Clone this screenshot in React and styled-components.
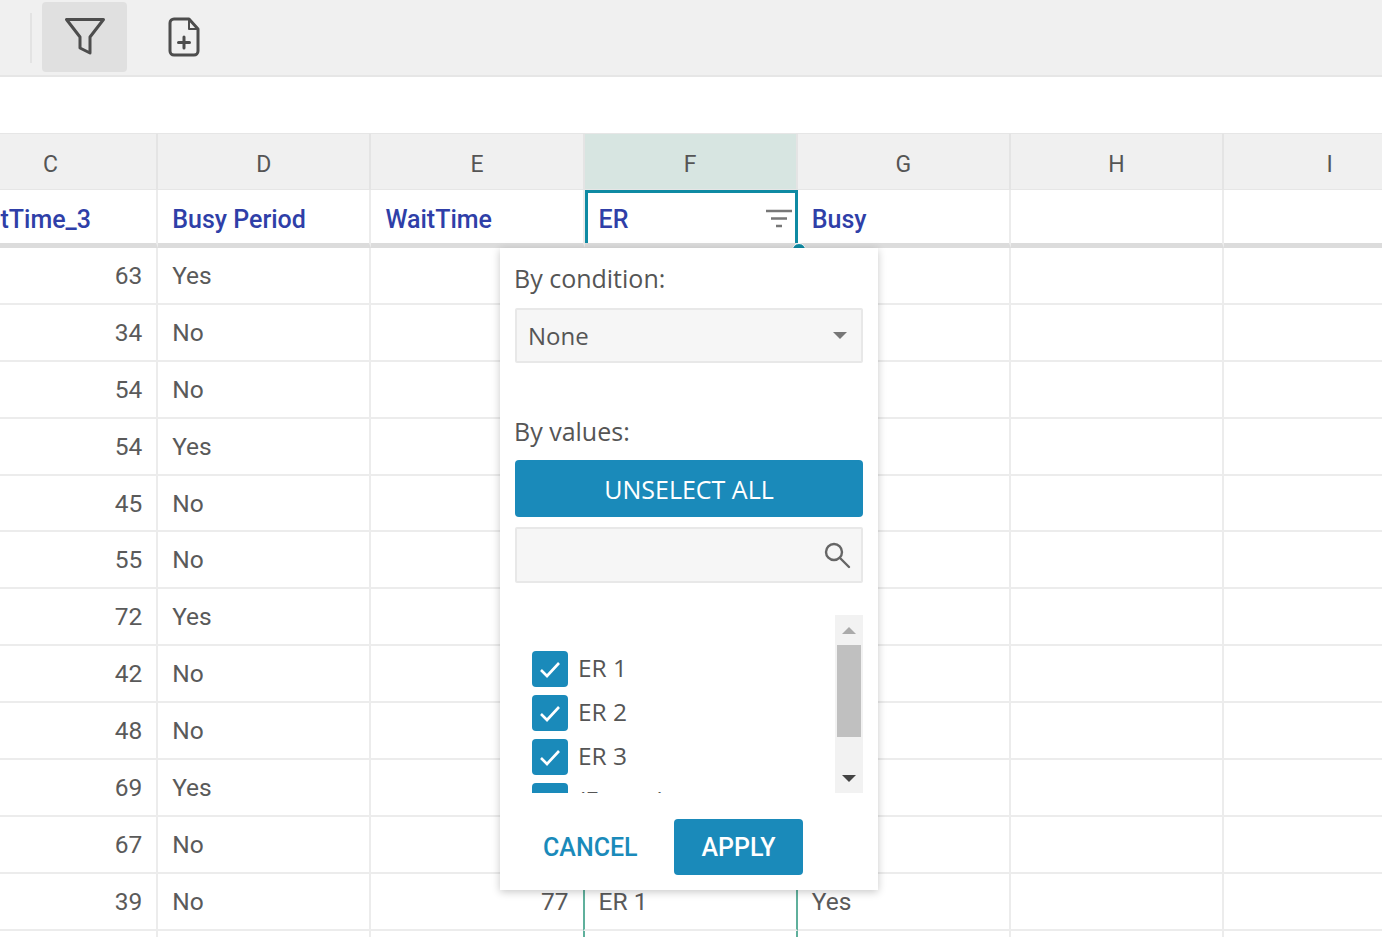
import React from 'react';
import styled, { createGlobalStyle } from 'styled-components';

const Global = createGlobalStyle`
  html, body { margin: 0; padding: 0; background: #fff; }
  body { font-family: Roboto, "Liberation Sans", sans-serif; color: #4a4a4a; }
`;

const Page = styled.div`
  position: relative;
  width: 1382px;
  height: 937px;
  overflow: hidden;
  background: #fff;
`;

const Toolbar = styled.div`
  height: 75px;
  display: flex;
  align-items: center;
  background: #f0f0f0;
  border-bottom: 2px solid #e6e6e6;
  padding-left: 30px;
`;

const Divider = styled.div`
  width: 2px;
  height: 50px;
  background: #e3e3e3;
  margin-right: 10px;
`;

const ToolButton = styled.div`
  width: 85px;
  height: 70px;
  margin-top: -1px;
  margin-right: 14px;
  display: flex;
  align-items: center;
  justify-content: center;
  border-radius: 4px;
  background: ${p => (p.$active ? '#e0e0e0' : 'transparent')};
`;

const Spacer = styled.div`
  height: 56px;
`;

const Grid = styled.div`
  display: grid;
  grid-template-columns: repeat(7, 213.2px);
  margin-left: -55px;
  width: 1500px;
`;

const ColHead = styled.div`
  height: 57px;
  display: flex;
  align-items: center;
  justify-content: center;
  box-sizing: border-box;
  padding-top: 5px;
  font-size: 23px;
  color: #555;
  background: ${p => (p.$selected ? '#d7e5e1' : '#f0f0f0')};
  border-top: 1px solid #e6e6e6;
  border-right: 2px solid #e4e4e4;
  border-bottom: 1px solid #e6e6e6;
`;

const TitleCell = styled.div`
  position: relative;
  height: 58px;
  box-sizing: border-box;
  display: flex;
  align-items: center;
  padding: 5px 3px 0 14px;
  font-size: 25px;
  font-weight: 500;
  color: #2f3fa8;
  border-right: 2px solid #ececec;
  border-bottom: 5px solid #dcdcdc;
`;

const ActiveFrame = styled.div`
  position: absolute;
  left: 0;
  right: -2px;
  top: 0;
  bottom: 0;
  border: 3px solid #0f8aa3;
  border-bottom: none;
  pointer-events: none;
`;

const Cell = styled.div`
  height: 56.9px;
  box-sizing: border-box;
  display: flex;
  align-items: center;
  justify-content: ${p => (p.$num ? 'flex-end' : 'flex-start')};
  padding: 0 14px;
  font-size: 24.5px;
  color: #5a5a5a;
  border-bottom: 2px solid #ececec;
  border-right: ${p => (p.$tealRight ? '2px solid #5fb09c' : '2px solid #ececec')};
  margin-left: ${p => (p.$tealLeft ? '-2px' : '0')};
  border-left: ${p => (p.$tealLeft ? '2px solid #5fb09c' : 'none')};
`;

const FilterIcon = styled.svg`
  margin-left: auto;
`;

const Popup = styled.div`
  position: absolute;
  left: 500px;
  top: 248px;
  width: 378px;
  height: 642px;
  box-sizing: border-box;
  padding: 14px 15px 0;
  background: #fff;
  box-shadow: 0 2px 8px rgba(0, 0, 0, 0.22);
  font-family: "Open Sans", sans-serif;
  display: flex;
  flex-direction: column;
`;

const Label = styled.div`
  font-size: 25px;
  line-height: 32px;
  color: #555;
  margin-top: ${p => p.$top || 0}px;
  margin-left: -1px;
`;

const Field = styled.div`
  height: ${p => p.$height || 56}px;
  margin-top: ${p => p.$top || 0}px;
  box-sizing: border-box;
  display: flex;
  align-items: center;
  justify-content: space-between;
  padding: 0 ${p => p.$right || 14}px 0 11px;
  background: #f6f6f6;
  border: 2px solid #e8e8e8;
  border-radius: 2px;
  font-size: 24px;
  color: #555;
`;

const Caret = styled.span`
  width: 0;
  height: 0;
  border-left: 7px solid transparent;
  border-right: 7px solid transparent;
  border-top: 7px solid ${p => p.$color || '#777'};
  ${p => p.$up && `border-top: none; border-bottom: 7px solid ${p.$color || '#aaa'};`}
`;

const UnselectButton = styled.div`
  height: 57px;
  margin: 13px 0 10px;
  box-sizing: border-box;
  display: flex;
  align-items: center;
  justify-content: center;
  background: #1a8aba;
  border-radius: 4px;
  color: #fff;
  font-size: 25px;
  font-weight: 500;
`;

const ListArea = styled.div`
  height: 178px;
  margin-top: 32px;
  display: flex;
  justify-content: space-between;
  overflow: hidden;
`;

const List = styled.div`
  padding: 36px 0 0 17px;
  display: flex;
  flex-direction: column;
  gap: 8px;
`;

const Row = styled.div`
  display: flex;
  align-items: center;
  gap: 10px;
  height: 36px;
  flex: none;
  font-size: 24.5px;
  color: #555;
`;

const ItemText = styled.span`
  margin-top: -3px;
`;

const Check = styled.span`
  width: 36px;
  height: 36px;
  display: flex;
  align-items: center;
  justify-content: center;
  background: #1a8aba;
  border-radius: 4px;
`;

const Scrollbar = styled.div`
  width: 28px;
  display: flex;
  flex-direction: column;
  align-items: center;
  background: #f2f2f2;
`;

const ScrollEnd = styled.div`
  height: 30px;
  display: flex;
  align-items: center;
  justify-content: center;
`;

const Thumb = styled.div`
  width: 24px;
  height: 92px;
  background: #c0c0c0;
`;

const ScrollGap = styled.div`
  flex: 1;
`;

const Footer = styled.div`
  display: flex;
  align-items: center;
  margin-top: 26px;
  padding-left: 28px;
  font-family: Roboto, sans-serif;
  font-size: 25px;
  font-weight: 500;
`;

const CancelLink = styled.span`
  color: #1a8aba;
  width: 131px;
`;

const ApplyButton = styled.div`
  width: 129px;
  height: 56px;
  display: flex;
  align-items: center;
  justify-content: center;
  background: #1a8aba;
  border-radius: 4px;
  color: #fff;
`;

const Handle = styled.div`
  position: absolute;
  left: 792px;
  top: 243px;
  width: 12px;
  height: 12px;
  border-radius: 50%;
  background: #0f8aa3;
  border: 1px solid #fff;
`;

const columns = ['C', 'D', 'E', 'F', 'G', 'H', 'I'];
// only the columns the filter popup leaves visible hold values
const rows = [
  [63, 'Yes'], [34, 'No'], [54, 'No'], [54, 'Yes'], [45, 'No'], [55, 'No'],
  [72, 'Yes'], [42, 'No'], [48, 'No'], [69, 'Yes'], [67, 'No'],
  [39, 'No', 77, 'ER 1', 'Yes'],
  [],
];

function CheckItem({ label }) {
  return (
    <Row>
      <Check>
        <svg width="24" height="24" viewBox="0 0 24 24" fill="none" stroke="#fff" strokeWidth="2.6">
          <path d="M3 13l6 6L21 6" />
        </svg>
      </Check>
      <ItemText>{label}</ItemText>
    </Row>
  );
}

export default function App() {
  return (
    <Page>
      <Global />
      <Toolbar>
        <Divider />
        <ToolButton $active>
          <svg width="42" height="40" viewBox="0 0 42 40" fill="none" stroke="#4d4d4d" strokeWidth="3" strokeLinejoin="round">
            <path d="M2.5 2.5h37L26 20v16l-10-5V20z" />
          </svg>
        </ToolButton>
        <ToolButton>
          <svg width="32" height="40" viewBox="0 0 32 40" fill="none" stroke="#4d4d4d" strokeWidth="3" strokeLinejoin="round" strokeLinecap="round">
            <path d="M6 2h15l9 10v22a4 4 0 0 1-4 4H6a4 4 0 0 1-4-4V6a4 4 0 0 1 4-4z" />
            <path d="M21 3v9h8" strokeWidth="2" />
            <path d="M16 20v11M10.500 25.500h11" />
          </svg>
        </ToolButton>
      </Toolbar>
      <Spacer />
      <Grid>
        {columns.map(c => (
          <ColHead key={c} $selected={c === 'F'}>{c}</ColHead>
        ))}
        <TitleCell>WaitTime_3</TitleCell>
        <TitleCell>Busy Period</TitleCell>
        <TitleCell>WaitTime</TitleCell>
        <TitleCell>
          ER
          <FilterIcon width="28" height="20" viewBox="0 0 28 20" fill="none" stroke="#777" strokeWidth="2.4">
            <path d="M1 2h26M6 9.500h16M11 17h6" />
          </FilterIcon>
          <ActiveFrame />
        </TitleCell>
        <TitleCell>Busy</TitleCell>
        <TitleCell />
        <TitleCell />
        {rows.map((r, i) => (
          <React.Fragment key={i}>
            <Cell $num>{r[0]}</Cell>
            <Cell>{r[1]}</Cell>
            <Cell $num>{r[2]}</Cell>
            <Cell $tealLeft $tealRight>{r[3]}</Cell>
            <Cell>{r[4]}</Cell>
            <Cell />
            <Cell />
          </React.Fragment>
        ))}
      </Grid>
      <Handle />
      <Popup>
        <Label>By condition:</Label>
        <Field $top={14} $height={55}>
          None
          <Caret />
        </Field>
        <Label $top={52}>By values:</Label>
        <UnselectButton>UNSELECT ALL</UnselectButton>
        <Field $right={10}>
          <span />
          <svg width="28" height="28" viewBox="0 0 28 28" fill="none" stroke="#666" strokeWidth="2.4" strokeLinecap="round">
            <circle cx="11" cy="11" r="8" />
            <path d="M17 17l9 9" />
          </svg>
        </Field>
        <ListArea>
          <List>
            <CheckItem label="ER 1" />
            <CheckItem label="ER 2" />
            <CheckItem label="ER 3" />
            <CheckItem label="(Empty)" />
          </List>
          <Scrollbar>
            <ScrollEnd><Caret $up /></ScrollEnd>
            <Thumb />
            <ScrollGap />
            <ScrollEnd><Caret $color="#444" /></ScrollEnd>
          </Scrollbar>
        </ListArea>
        <Footer>
          <CancelLink>CANCEL</CancelLink>
          <ApplyButton>APPLY</ApplyButton>
        </Footer>
      </Popup>
    </Page>
  );
}
